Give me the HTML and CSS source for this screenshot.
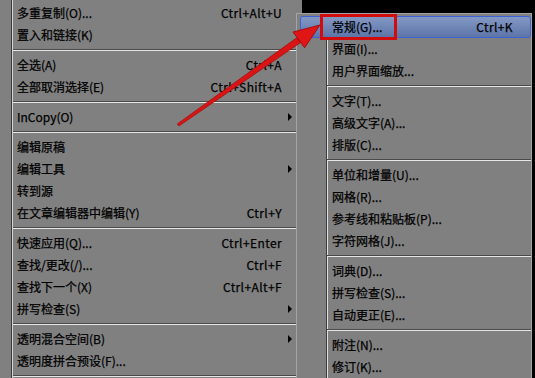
FILE: index.html
```html
<!DOCTYPE html>
<html lang="zh">
<head>
<meta charset="utf-8">
<link rel="stylesheet" href="styles.css">
</head>
<body>
<div class="menu">
  <div class="gutter"></div>
  <div class="list">
    <div class="item"><span class="label">多重复制(O)...</span><span class="key">Ctrl+Alt+U</span></div>
    <div class="item"><span class="label">置入和链接(K)</span></div>
    <div class="sep"></div>
    <div class="item"><span class="label">全选(A)</span><span class="key">Ctrl+A</span></div>
    <div class="item"><span class="label">全部取消选择(E)</span><span class="key">Ctrl+Shift+A</span></div>
    <div class="sep"></div>
    <div class="item"><span class="label">InCopy(O)</span><span class="tri"></span></div>
    <div class="sep"></div>
    <div class="item"><span class="label">编辑原稿</span></div>
    <div class="item"><span class="label">编辑工具</span><span class="tri"></span></div>
    <div class="item"><span class="label">转到源</span></div>
    <div class="item"><span class="label">在文章编辑器中编辑(Y)</span><span class="key">Ctrl+Y</span></div>
    <div class="sep"></div>
    <div class="item"><span class="label">快速应用(Q)...</span><span class="key">Ctrl+Enter</span></div>
    <div class="item"><span class="label">查找/更改(/)...</span><span class="key">Ctrl+F</span></div>
    <div class="item"><span class="label">查找下一个(X)</span><span class="key">Ctrl+Alt+F</span></div>
    <div class="item"><span class="label">拼写检查(S)</span><span class="tri"></span></div>
    <div class="sep"></div>
    <div class="item"><span class="label">透明混合空间(B)</span><span class="tri"></span></div>
    <div class="item"><span class="label">透明度拼合预设(F)...</span></div>
    <div class="sep"></div>
  </div>
</div>

<div class="submenu">
  <div class="sub-item active"><span class="label">常规(G)...</span><span class="key">Ctrl+K</span><span class="mark"></span></div>
  <div class="sub-item"><span class="label">界面(I)...</span></div>
  <div class="sub-item"><span class="label">用户界面缩放...</span></div>
  <div class="sub-sep"></div>
  <div class="sub-item"><span class="label">文字(T)...</span></div>
  <div class="sub-item"><span class="label">高级文字(A)...</span></div>
  <div class="sub-item"><span class="label">排版(C)...</span></div>
  <div class="sub-sep"></div>
  <div class="sub-item"><span class="label">单位和增量(U)...</span></div>
  <div class="sub-item"><span class="label">网格(R)...</span></div>
  <div class="sub-item"><span class="label">参考线和粘贴板(P)...</span></div>
  <div class="sub-item"><span class="label">字符网格(J)...</span></div>
  <div class="sub-sep"></div>
  <div class="sub-item"><span class="label">词典(D)...</span></div>
  <div class="sub-item"><span class="label">拼写检查(S)...</span></div>
  <div class="sub-item"><span class="label">自动更正(E)...</span></div>
  <div class="sub-sep"></div>
  <div class="sub-item"><span class="label">附注(N)...</span></div>
  <div class="sub-item"><span class="label">修订(K)...</span></div>
</div>

<svg class="arrow" width="535" height="378" viewBox="0 0 535 378" xmlns="http://www.w3.org/2000/svg">
  <polygon points="177.3,123.9 178.8,126.1 300.6,42.6 297.0,37.6" fill="#d81414" stroke="#a00000" stroke-width="0.6"/>
  <polygon points="320,25 304.6,47.8 293.0,32.0" fill="#e01616" stroke="#a00000" stroke-width="0.8"/>
</svg>
</body>
</html>
```
FILE: styles.css
```css
html, body {
  margin: 0;
  padding: 0;
}
body {
  width: 535px;
  height: 378px;
  overflow: hidden;
  position: relative;
  background: #000;
  font-family: "Noto Sans CJK SC", "Noto Sans", sans-serif;
  font-size: 12px;
  color: #000;
  -webkit-text-stroke: 0.25px #000;
}
.menu {
  width: 302px;
  height: 378px;
  background: #808080;
  display: flex;
}
.gutter {
  width: 11px;
  border-right: 1px solid #3c3c3c;
}
.list {
  flex: 1;
  border-left: 1px solid #d4d4d4;
  padding-top: 2px;
}
.item {
  height: 22px;
  display: flex;
  align-items: center;
  padding-left: 4px;
  padding-right: 20px;
  position: relative;
  line-height: 16px;
  white-space: nowrap;
}
.label {
  flex: 1;
}
.key {
  letter-spacing: 0.4px;
}
.tri {
  position: absolute;
  right: 10px;
  top: 7px;
  width: 0;
  height: 0;
  border-left: 4px solid #000;
  border-top: 4px solid transparent;
  border-bottom: 4px solid transparent;
}
.sep {
  margin: 3px 5px 3px 0;
  border-top: 1px solid #4a4a4a;
  border-bottom: 1px solid #e6e6e6;
}
.submenu {
  position: absolute;
  left: 296px;
  top: 13px;
  width: 236px;
  height: 365px;
  box-sizing: border-box;
  border: 1px solid #a4a4a4;
  border-bottom: none;
  padding-top: 2px;
  background:
    linear-gradient(to right, transparent 29px, #3c3c3c 29px, #3c3c3c 30px, #e0e0e0 30px, #e0e0e0 31px, transparent 31px),
    #808080;
}
.sub-item {
  height: 22px;
  box-sizing: border-box;
  display: flex;
  align-items: center;
  margin-left: 3px;
  padding-left: 32px;
  padding-right: 18px;
  position: relative;
  line-height: 16px;
  white-space: nowrap;
}
.sub-item.active {
  border: 1px solid #3f63d6;
  border-radius: 3px;
  padding-left: 31px;
  padding-right: 17px;
  background: linear-gradient(#8498c4, #5c75a8);
}
.mark {
  position: absolute;
  left: 19px;
  top: -3px;
  width: 77px;
  height: 26px;
  box-sizing: border-box;
  border: 3px solid #d20c0c;
}
.sub-sep {
  margin: 3px 0 3px 30px;
  border-top: 1px solid #4a4a4a;
  border-bottom: 1px solid #e6e6e6;
}
.arrow {
  position: absolute;
  left: 0;
  top: 0;
  pointer-events: none;
}
```
